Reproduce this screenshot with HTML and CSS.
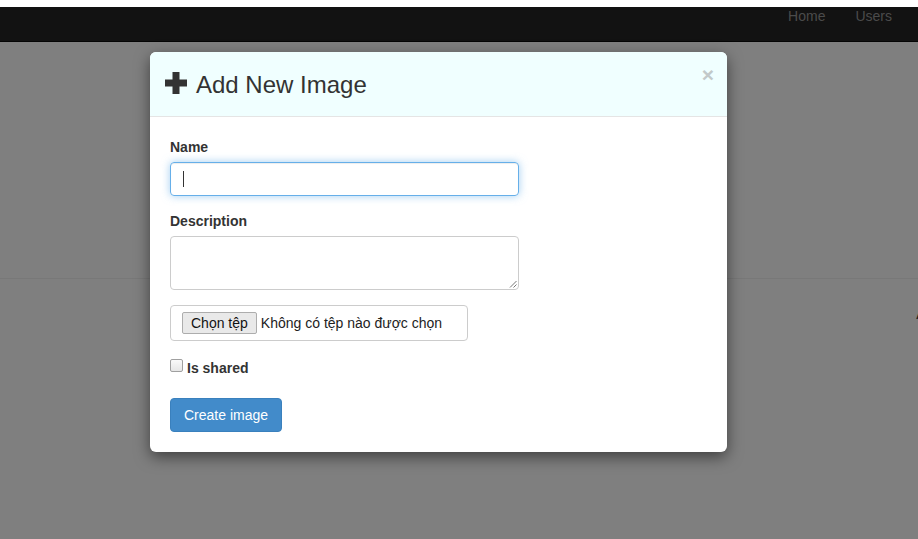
FILE: index.html
```html
<!DOCTYPE html>
<html>
<head>
<meta charset="utf-8">
<link rel="stylesheet" href="styles.css">
</head>
<body>
<div class="topstrip"></div>
<nav class="navbar">
  <ul class="nav">
    <li><a href="#">Home</a></li>
    <li><a href="#">Users</a></li>
  </ul>
</nav>
<main class="page">
  <div class="jumbo"></div>
  <div class="content"><span class="cut">A</span></div>
</main>

<div class="modal">
  <div class="modal-header">
    <svg class="plus" width="22" height="22" viewBox="0 0 22 22"><path d="M7.5 0h7v7.5H22v7h-7.5V22h-7v-7.5H0v-7h7.5z" fill="#333"/></svg>
    <h4 class="modal-title">Add New Image</h4>
    <span class="close">×</span>
  </div>
  <div class="modal-body">
    <div class="form-group">
      <label class="label">Name</label>
      <div class="input focus"><span class="caret"></span></div>
    </div>
    <div class="form-group">
      <label class="label">Description</label>
      <div class="textarea">
        <svg class="grip" width="8" height="8" viewBox="0 0 8 8"><path d="M7.5 1L1 7.5M7.5 4.5L4.5 7.5" stroke="#777" stroke-width="1"/></svg>
      </div>
    </div>
    <div class="form-group">
      <div class="file">
        <span class="file-btn">Chọn tệp</span>
        <span class="file-text">Không có tệp nào được chọn</span>
      </div>
    </div>
    <div class="check">
      <span class="box"></span>
      <span class="check-label">Is shared</span>
    </div>
    <button class="btn">Create image</button>
  </div>
</div>
</body>
</html>
```

FILE: styles.css
```css
html, body {
  margin: 0;
  padding: 0;
}
body {
  font-family: "Liberation Sans", Arial, sans-serif;
  font-size: 14px;
  color: #333;
  background: #7f7f7f;
  width: 918px;
  height: 539px;
  overflow: hidden;
  position: relative;
}
.topstrip {
  height: 7px;
  background: #fff;
}
.navbar {
  height: 34px;
  background: #121212;
  border-bottom: 1px solid #050505;
  display: flex;
  justify-content: flex-end;
}
.nav {
  list-style: none;
  margin: 0 11px 0 0;
  padding: 0;
  display: flex;
}
.nav a {
  display: block;
  padding: 0 15px;
  line-height: 18px;
  color: #4b4b4b;
  text-decoration: none;
  font-size: 14px;
}
.page {
  display: flex;
  flex-direction: column;
}
.jumbo {
  height: 236px;
  border-bottom: 1px solid #787878;
}
.content {
  display: flex;
  justify-content: flex-end;
  padding-top: 26px;
  height: 30px;
  overflow: hidden;
}
.cut {
  font-size: 16px;
  color: #1c1c1c;
  margin-right: -9px;
}
.modal {
  position: absolute;
  left: 150px;
  top: 52px;
  width: 577px;
  background: #fff;
  border-radius: 6px;
  box-shadow: 0 5px 15px rgba(0,0,0,.5);
  overflow: hidden;
}
.modal-header {
  background: #f0ffff;
  border-bottom: 1px solid #e5e5e5;
  padding: 15px 15px 14px 15px;
  display: flex;
  align-items: center;
  height: 35px;
}
.plus {
  flex: none;
  margin-top: -3px;
}
.modal-title {
  margin: 0 0 0 9px;
  font-size: 24px;
  font-weight: normal;
  line-height: 34px;
  color: #333;
  flex: 1;
}
.close {
  font-size: 21px;
  font-weight: bold;
  color: #c2c9c9;
  line-height: 1;
  align-self: flex-start;
  margin: -3px -2px 0 0;
}
.modal-body {
  padding: 20px 20px 20px 20px;
}
.form-group {
  margin-bottom: 15px;
}
.label {
  display: block;
  font-weight: bold;
  line-height: 20px;
  margin-bottom: 5px;
}
.input {
  box-sizing: border-box;
  width: 349px;
  height: 34px;
  border: 1px solid #ccc;
  border-radius: 4px;
  display: flex;
  align-items: center;
  padding: 0 12px;
}
.input.focus {
  border-color: #66afe9;
  box-shadow: inset 0 1px 1px rgba(0,0,0,.075), 0 0 8px rgba(102,175,233,.6);
}
.caret {
  width: 1px;
  height: 16px;
  background: #333;
}
.textarea {
  box-sizing: border-box;
  width: 349px;
  height: 54px;
  border: 1px solid #ccc;
  border-radius: 4px;
  display: flex;
  justify-content: flex-end;
  align-items: flex-end;
  padding: 0 1px 1px 0;
}
.grip {
  display: block;
}
.file {
  box-sizing: border-box;
  width: 298px;
  height: 36px;
  border: 1px solid #ccc;
  border-radius: 4px;
  display: flex;
  align-items: center;
  padding: 0 11px;
}
.file-btn {
  box-sizing: border-box;
  height: 22px;
  line-height: 20px;
  padding: 0 8px;
  background: #e9e9e9;
  border: 1px solid #adadad;
  border-radius: 2px;
  color: #111;
  font-size: 14px;
}
.file-text {
  margin-left: 4px;
  color: #222;
  font-size: 14px;
}
.check {
  display: flex;
  align-items: center;
  height: 20px;
  margin: 0 0 22px 0;
}
.box {
  box-sizing: border-box;
  width: 13px;
  height: 13px;
  border: 1px solid #a0a0a0;
  border-radius: 2px;
  background: linear-gradient(#fafafa, #e6e6e6);
  margin-top: -2px;
}
.check-label {
  font-weight: bold;
  margin-left: 4px;
  line-height: 20px;
  margin-top: 4px;
}
.btn {
  box-sizing: border-box;
  height: 34px;
  width: 112px;
  padding: 0;
  border: 1px solid #3a80bd;
  border-radius: 4px;
  background: #428bca;
  color: #fff;
  font-family: "Liberation Sans", Arial, sans-serif;
  font-size: 14px;
  line-height: 20px;
  display: block;
}
```
